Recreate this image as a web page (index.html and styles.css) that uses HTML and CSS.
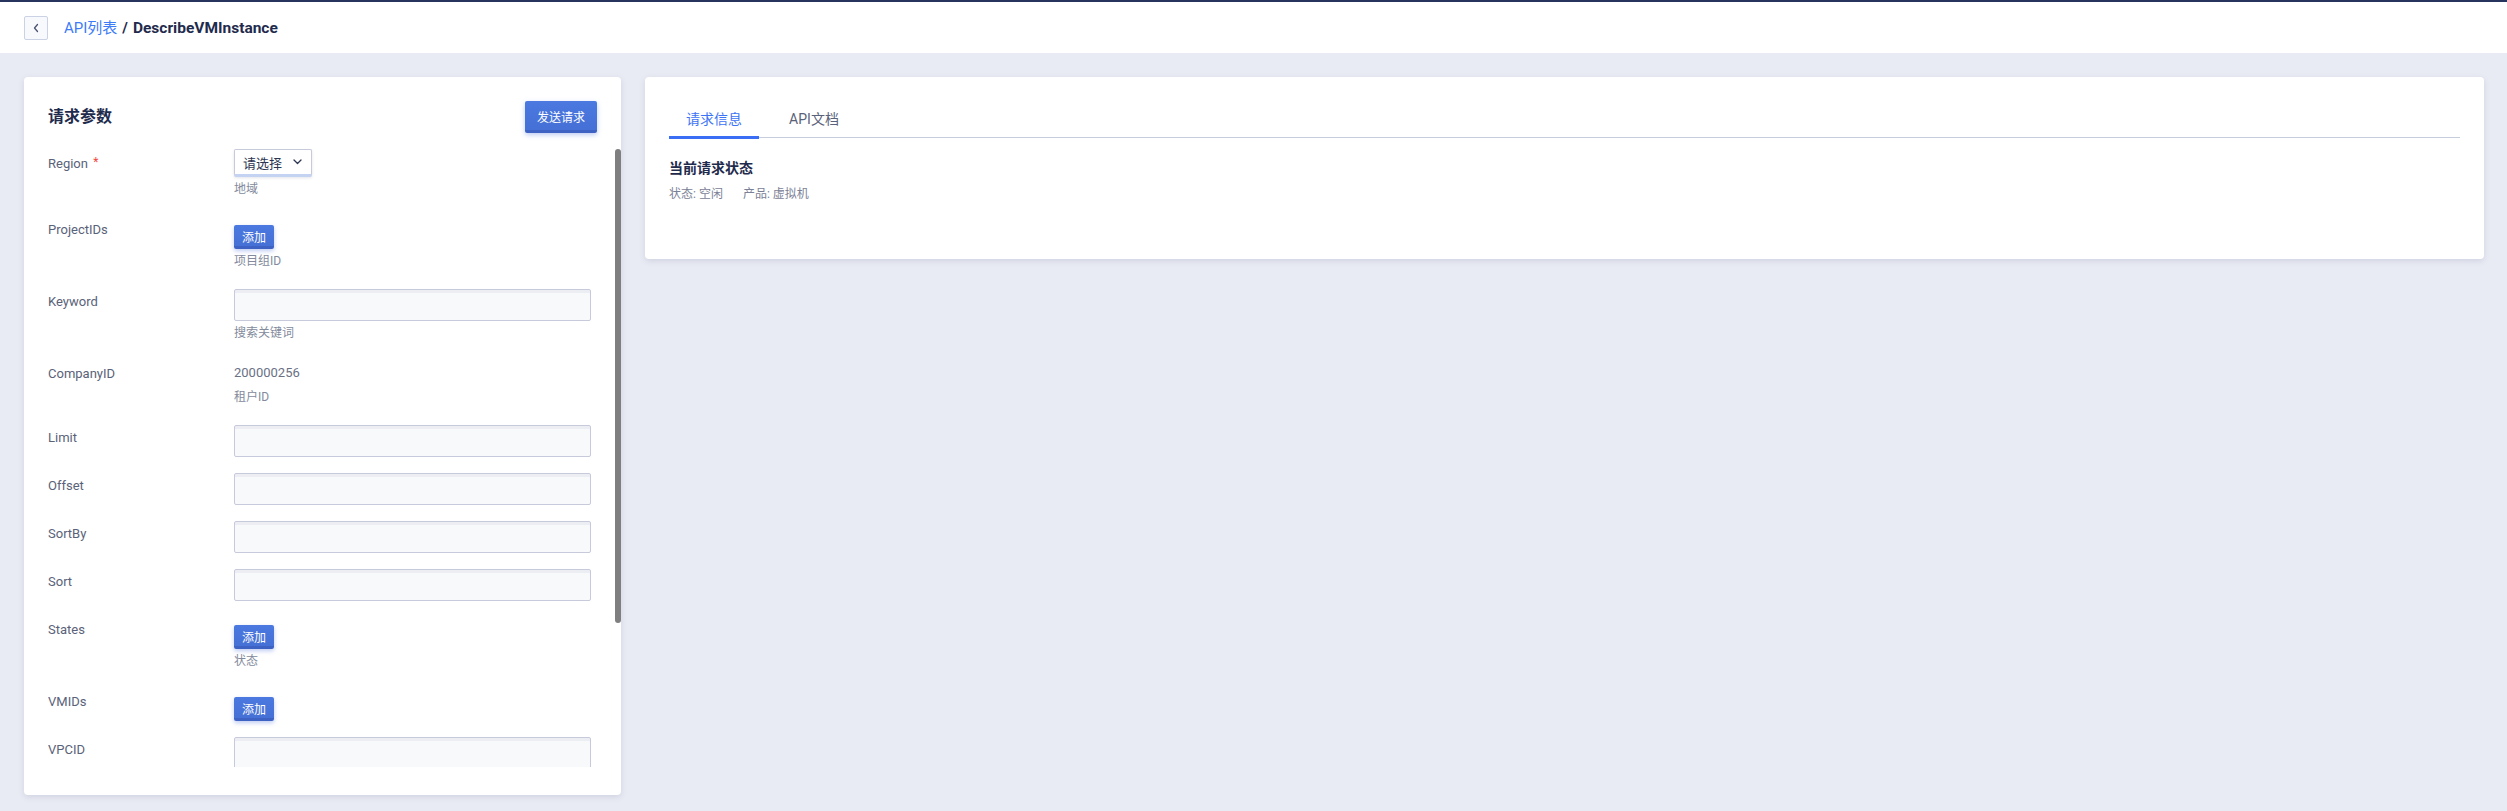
FILE: index.html
```html
<!DOCTYPE html>
<html lang="zh-CN">
<head>
<meta charset="utf-8">
<title>DescribeVMInstance</title>
<link rel="stylesheet" href="styles.css">
</head>
<body>
<header class="topbar">
  <button class="back-btn" type="button" aria-label="返回">
    <svg width="8" height="10" viewBox="0 0 8 10"><polyline points="5.5,1.5 2.5,5 5.5,8.5" fill="none" stroke="#4a5270" stroke-width="1.3" stroke-linecap="round" stroke-linejoin="round"/></svg>
  </button>
  <nav class="crumbs">
    <a class="crumb-link">API列表</a>
    <span class="crumb-sep">/</span>
    <span class="crumb-current">DescribeVMInstance</span>
  </nav>
</header>

<main class="workspace">
  <section class="card params">
    <div class="params-head">
      <h2 class="card-title">请求参数</h2>
      <button class="btn-primary" type="button">发送请求</button>
    </div>
    <div class="scroll-frame">
      <div class="params-scroll">
        <div class="field">
          <div class="field-label">Region <span class="req">*</span></div>
          <div class="field-control">
            <div class="select">请选择
              <svg width="9" height="6" viewBox="0 0 9 6"><polyline points="1,1 4.5,4.5 8,1" fill="none" stroke="#2c3552" stroke-width="1.3" stroke-linecap="round" stroke-linejoin="round"/></svg>
            </div>
            <div class="hint">地域</div>
          </div>
        </div>
        <div class="field">
          <div class="field-label">ProjectIDs</div>
          <div class="field-control">
            <button class="btn-add" type="button">添加</button>
            <div class="hint">项目组ID</div>
          </div>
        </div>
        <div class="field">
          <div class="field-label">Keyword</div>
          <div class="field-control">
            <input class="text-input" type="text">
            <div class="hint">搜索关键词</div>
          </div>
        </div>
        <div class="field">
          <div class="field-label">CompanyID</div>
          <div class="field-control">
            <div class="value">200000256</div>
            <div class="hint">租户ID</div>
          </div>
        </div>
        <div class="field">
          <div class="field-label">Limit</div>
          <div class="field-control"><input class="text-input" type="text"></div>
        </div>
        <div class="field">
          <div class="field-label">Offset</div>
          <div class="field-control"><input class="text-input" type="text"></div>
        </div>
        <div class="field">
          <div class="field-label">SortBy</div>
          <div class="field-control"><input class="text-input" type="text"></div>
        </div>
        <div class="field">
          <div class="field-label">Sort</div>
          <div class="field-control"><input class="text-input" type="text"></div>
        </div>
        <div class="field">
          <div class="field-label">States</div>
          <div class="field-control">
            <button class="btn-add" type="button">添加</button>
            <div class="hint">状态</div>
          </div>
        </div>
        <div class="field">
          <div class="field-label">VMIDs</div>
          <div class="field-control">
            <button class="btn-add" type="button">添加</button>
          </div>
        </div>
        <div class="field">
          <div class="field-label">VPCID</div>
          <div class="field-control"><input class="text-input" type="text"></div>
        </div>
      </div>
      <div class="scroll-thumb"></div>
    </div>
  </section>

  <section class="card info">
    <div class="tabs">
      <div class="tab active">请求信息</div>
      <div class="tab">API文档</div>
    </div>
    <h3 class="section-title">当前请求状态</h3>
    <div class="status">
      <span class="status-item">状态: 空闲</span>
      <span class="status-item">产品: 虚拟机</span>
    </div>
  </section>
</main>
</body>
</html>
```

FILE: styles.css
```css
* { box-sizing: border-box; }

html, body {
  margin: 0;
  height: 100%;
}

body {
  font-family: Roboto, "Noto Sans CJK SC", sans-serif;
  background: #e9ebf4;
  color: #1f2b4d;
  overflow: hidden;
}

.topbar {
  height: 53px;
  background: #ffffff;
  border-top: 2px solid #27345e;
  display: flex;
  align-items: center;
  padding: 0 24px;
  gap: 16px;
}

.back-btn {
  width: 24px;
  height: 24px;
  padding: 0;
  border: 1px solid #ccd2e6;
  border-radius: 2px;
  background: #f8f9fd;
  display: flex;
  align-items: center;
  justify-content: center;
}

.crumbs {
  display: flex;
  align-items: center;
  font-size: 15px;
  line-height: 22px;
}

.crumb-link {
  color: #3d7bf7;
}

.crumb-sep {
  font-weight: 700;
  color: #1f2b4d;
  margin: 0 5px 0 5px;
}

.crumb-current {
  font-weight: 700;
  font-size: 15.5px;
  color: #1f2b4d;
}

.workspace {
  height: calc(100% - 53px);
  padding: 24px 23px 16px 24px;
  display: flex;
  align-items: flex-start;
  gap: 24px;
}

.card {
  background: #ffffff;
  border-radius: 4px;
  box-shadow: 0 2px 6px rgba(40, 50, 90, 0.13);
}

.params {
  width: 597px;
  height: 100%;
  flex: none;
  display: flex;
  flex-direction: column;
  padding: 24px 0 28px 0;
}

.params-head {
  display: flex;
  justify-content: space-between;
  align-items: center;
  padding: 0 24px;
  margin-bottom: 16px;
}

.card-title {
  margin: 0;
  font-size: 16px;
  font-weight: 700;
  line-height: 22px;
  color: #1f2b4d;
}

.btn-primary {
  width: 72px;
  height: 32px;
  border: none;
  border-bottom: 3px solid #3e61c4;
  border-radius: 2px;
  background: linear-gradient(#4b79e0, #4570d6);
  color: #ffffff;
  font-family: inherit;
  font-size: 12px;
  padding: 0;
  padding-top: 2px;
  box-shadow: 0 2px 5px rgba(70, 110, 220, 0.35);
}

.scroll-frame {
  flex: 1;
  min-height: 0;
  position: relative;
}

.params-scroll {
  height: 100%;
  overflow: hidden;
  padding: 0 30px 0 24px;
  display: flex;
  flex-direction: column;
  gap: 16px;
}

.scroll-thumb {
  position: absolute;
  top: 0;
  right: 0;
  width: 6px;
  height: 474px;
  background: #7f7f7f;
  border-radius: 3px;
}

.field {
  display: grid;
  grid-template-columns: 186px 1fr;
  flex: none;
}

.field-label {
  font-size: 13px;
  line-height: 20px;
  padding-top: 3px;
  color: #5a6279;
}

.req {
  color: #f0483e;
  font-size: 12px;
  margin-left: 2px;
  vertical-align: 2px;
}

.field-control {
  display: flex;
  flex-direction: column;
  align-items: flex-start;
}

.select {
  width: 78px;
  height: 28px;
  border: 1px solid #c6cada;
  border-bottom: 3px solid #c5d3f2;
  border-radius: 2px;
  background: #ffffff;
  box-shadow: 0 1px 3px rgba(30, 40, 80, 0.12);
  display: flex;
  align-items: center;
  justify-content: space-between;
  padding: 0 9px 0 8px;
  font-size: 13px;
  color: #2c3552;
}

.text-input {
  width: 100%;
  height: 32px;
  border: 1px solid #c6cadb;
  border-radius: 2px;
  background: #f8f9fb;
  box-shadow: inset 0 3px 0 #eceef4;
  margin: 0;
  font-family: inherit;
}

.btn-add {
  margin-top: 8px;
  width: 40px;
  height: 24px;
  border: none;
  border-bottom: 3px solid #3e61c4;
  border-radius: 2px;
  background: linear-gradient(#4b79e0, #4570d6);
  color: #ffffff;
  font-family: inherit;
  font-size: 12px;
  padding: 0;
  padding-top: 2px;
  box-shadow: 0 2px 4px rgba(70, 110, 220, 0.35);
}

.hint {
  margin: 2px 0;
  font-size: 12px;
  line-height: 20px;
  color: #838a9c;
}

.value {
  font-size: 13px;
  line-height: 24px;
  color: #6a7185;
}

.info {
  flex: 1;
  padding: 24px 24px 55px 24px;
}

.tabs {
  display: flex;
  gap: 10px;
  height: 37px;
  border-bottom: 1px solid #c8cddd;
}

.tab {
  width: 90px;
  height: 36px;
  line-height: 36px;
  text-align: center;
  font-size: 14px;
  color: #5a6279;
  position: relative;
}

.tab.active {
  color: #3d74f5;
}

.tab.active::after {
  content: "";
  position: absolute;
  left: 0;
  right: 0;
  bottom: -2px;
  height: 3px;
  background: #3a6ff5;
}

.section-title {
  margin: 20px 0 0 0;
  font-size: 14px;
  font-weight: 700;
  line-height: 20px;
  color: #1f2b4d;
}

.status {
  margin-top: 6px;
  font-size: 12px;
  line-height: 20px;
  color: #7b8196;
}

.status-item + .status-item {
  margin-left: 17px;
}
```
